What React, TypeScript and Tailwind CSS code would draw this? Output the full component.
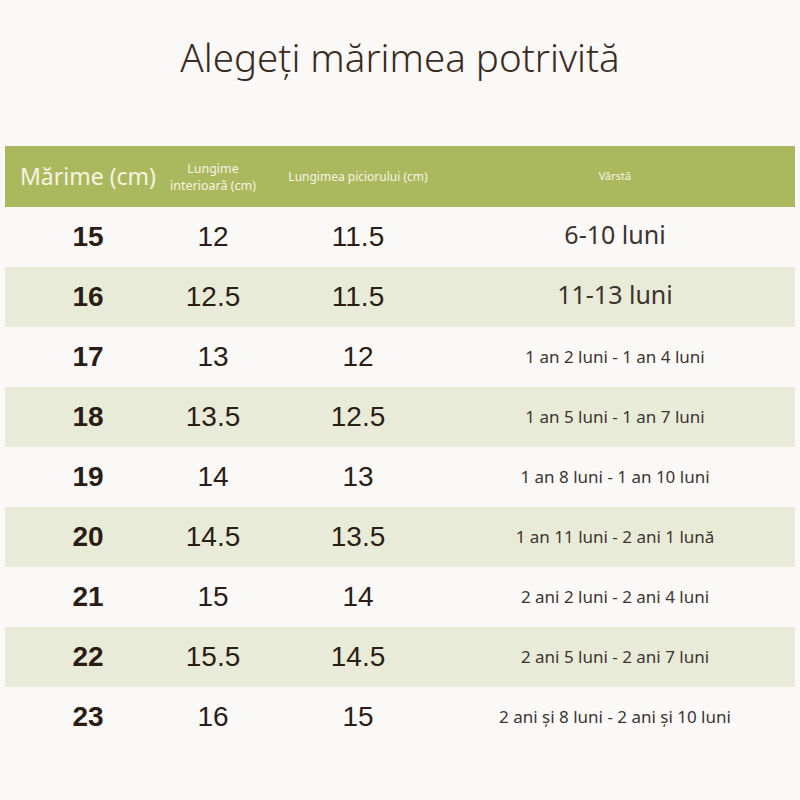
const rows = [
  ["15", "12", "11.5", "6-10 luni", true],
  ["16", "12.5", "11.5", "11-13 luni", true],
  ["17", "13", "12", "1 an 2 luni - 1 an 4 luni", false],
  ["18", "13.5", "12.5", "1 an 5 luni - 1 an 7 luni", false],
  ["19", "14", "13", "1 an 8 luni - 1 an 10 luni", false],
  ["20", "14.5", "13.5", "1 an 11 luni - 2 ani 1 lună", false],
  ["21", "15", "14", "2 ani 2 luni - 2 ani 4 luni", false],
  ["22", "15.5", "14.5", "2 ani 5 luni - 2 ani 7 luni", false],
  ["23", "16", "15", "2 ani și 8 luni - 2 ani și 10 luni", false],
] as const;

const cols = "grid grid-cols-[166px_84px_206px_308px_1fr] items-center";

export default function App() {
  return (
    <div className="w-[800px] h-[800px] bg-[#faf9f7] overflow-hidden font-['Noto_Sans',sans-serif]">
      <h1 className="h-[146px] pt-[30px] text-center text-[38.5px] font-light leading-[54px] text-[#3a2a20]">
        Alegeți mărimea potrivită
      </h1>
      <div className="mx-[5px]">
        <div className={`${cols} h-[61px] bg-[#aab95d] text-[#f6f3e3]`}>
          <div className="text-center text-[23px] whitespace-nowrap">Mărime (cm)</div>
          <div className="flex flex-col items-center text-[12.5px] leading-[17px] whitespace-nowrap">
            <span>Lungime</span>
            <span>interioară (cm)</span>
          </div>
          <div className="text-center text-[12px] whitespace-nowrap">Lungimea piciorului (cm)</div>
          <div className="text-center text-[11px]">Vârstă</div>
          <div />
        </div>
        {rows.map(([size, inner, foot, age, big], i) => (
          <div
            key={size}
            className={`${cols} h-[60px] ${i % 2 === 1 ? "bg-[#e9ebd9]" : "bg-[#faf9f7]"}`}
          >
            <div className="text-center text-[28px] font-bold text-[#2b1d14] font-['Liberation_Sans',sans-serif]">
              {size}
            </div>
            <div className="text-center text-[28px] text-[#2b1d14] font-['Liberation_Sans',sans-serif]">
              {inner}
            </div>
            <div className="text-center text-[28px] text-[#2b1d14] font-['Liberation_Sans',sans-serif]">
              {foot}
            </div>
            <div
              className={`text-center whitespace-nowrap text-[#3d3430] ${
                big ? "text-[25px] -mt-[4px]" : "text-[17px]"
              }`}
            >
              {age}
            </div>
            <div />
          </div>
        ))}
      </div>
    </div>
  );
}
